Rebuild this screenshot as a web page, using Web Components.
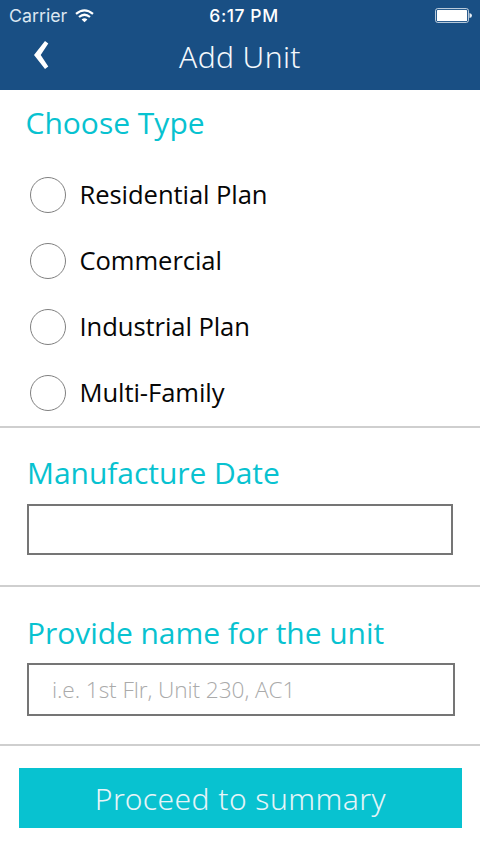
<!DOCTYPE html>
<html lang="en">
<head>
<meta charset="utf-8">
<title>Add Unit</title>
<style>
body { margin: 0; background: #fff; font-family: "Open Sans", "Noto Sans", sans-serif; }
</style>
</head>
<body>
<unit-app></unit-app>
<script>
function define(name, markup) {
  const template = document.createElement('template');
  template.innerHTML = markup;
  customElements.define(name, class extends HTMLElement {
    constructor() {
      super();
      this.attachShadow({ mode: 'open' }).append(template.content.cloneNode(true));
    }
  });
}

define('status-bar', `
<style>
:host { display: grid; grid-template-columns: 1fr auto 1fr; align-items: center; height: 31px; padding: 0 8px 0 9px; box-sizing: border-box; color: #fff; font: 17.8px/22px Inter, sans-serif; }
.left { display: flex; align-items: center; gap: 8px; color: #dce7f1; }
.time { font-weight: 550; font-size: 17.5px; letter-spacing: .55px; padding-left: 7px; }
svg { display: block; }
.battery { justify-self: end; }
</style>
<div class="left"><span>Carrier</span>
<svg width="19" height="14" viewBox="0 0 19 14" fill="none" stroke="#fff" stroke-width="2.200"><path d="M1 4.800Q9.500-2.200 18 4.800M4 8Q9.500 3.500 15 8"/><path d="M6.600 10.400Q9.500 8.200 12.400 10.400L9.500 13.300Z" fill="#fff" stroke="none"/></svg></div>
<span class="time">6:17 PM</span>
<svg class="battery" width="37" height="15" viewBox="0 0 37 15"><rect x=".6" y=".6" width="32.800" height="13.800" rx="2" fill="none" stroke="#cbd8e5" stroke-width="1"/><rect x="2" y="2" width="30" height="11" rx=".6" fill="#fff"/><path d="M34.500 5Q37 5.500 37 7.500T34.500 10Z" fill="#e8eef4"/></svg>`);

define('nav-bar', `
<style>
:host { display: grid; grid-template-columns: 80px 1fr 80px; align-items: center; height: 59px; padding-bottom: 9px; box-sizing: border-box; color: #f4f8fc; }
h1 { margin: 0; padding-top: 2px; text-align: center; font-family: "Noto Sans", sans-serif; font-weight: 300; font-size: 30px; line-height: 40px; letter-spacing: .4px; }
svg { display: block; margin: 0 0 3px 33px; }
</style>
<svg width="16" height="30" viewBox="0 0 16 30"><path d="M12 1L15.300 3.500L7.700 15L15.300 26.500L12 29L1 15Z" fill="#fff"/></svg>
<h1><slot></slot></h1>`);

define('form-section', `
<style>
:host { display: flex; flex-direction: column; box-sizing: border-box; border-bottom: 2px solid #cfcfcf; }
h2 { margin: 0; font-weight: 370; font-size: 30px; line-height: 40px; color: #08c2d0; white-space: nowrap; padding-left: var(--title-x, 27px); letter-spacing: var(--title-track, -.05px); }
</style>
<h2><slot name="title"></slot></h2><slot></slot>`);

define('radio-option', `
<style>
:host { display: flex; align-items: center; gap: 13.500px; height: 66px; padding-left: 30px; font-size: 25.6px; font-weight: 380; line-height: 34px; color: #060606; letter-spacing: -.08px; }
i { box-sizing: border-box; width: 36px; height: 36px; border: 1px solid #808080; border-radius: 50%; }
</style>
<i></i><span><slot></slot></span>`);

define('text-field', `
<style>
:host { display: flex; align-items: center; box-sizing: border-box; border: 2px solid #757575; padding-left: 23px; font-weight: 300; font-size: 22.7px; line-height: 30px; letter-spacing: -.1px; color: #aaa; }
</style>
<slot></slot>`);

define('action-button', `
<style>
:host { display: block; }
button { display: flex; align-items: center; justify-content: center; width: 100%; height: 60px; border: 0; padding: 2px 0 0 0; background: #08c2d0; color: #e5f4f8; font: 300 30px/40px "Noto Sans", sans-serif; letter-spacing: .46px; }
</style>
<button><slot></slot></button>`);

define('unit-app', `
<style>
:host { display: block; width: 480px; height: 852px; background: #fff; overflow: hidden; }
header { background: #194f84; height: 90px; }
.type { height: 338px; padding-top: 13px; --title-x: 25.5px; --title-track: 0; }
.type [slot=title] { display: block; height: 59px; }
.date { height: 159px; padding-top: 25px; }
.date text-field { width: 426px; height: 51px; margin: 11px 0 0 27px; }
.name { height: 159px; padding-top: 26px; }
.name text-field { width: 428px; height: 53px; margin: 10px 0 0 27px; }
action-button { margin: 22px 18px 0 19px; }
</style>
<header><status-bar></status-bar><nav-bar>Add Unit</nav-bar></header>
<main>
<form-section class="type"><span slot="title">Choose Type</span>
<radio-option>Residential Plan</radio-option>
<radio-option>Commercial</radio-option>
<radio-option>Industrial Plan</radio-option>
<radio-option>Multi-Family</radio-option></form-section>
<form-section class="date"><span slot="title">Manufacture Date</span><text-field></text-field></form-section>
<form-section class="name"><span slot="title">Provide name for the unit</span><text-field>i.e. 1st Flr, Unit 230, AC1</text-field></form-section>
<action-button>Proceed to summary</action-button>
</main>`);
</script>
</body>
</html>
